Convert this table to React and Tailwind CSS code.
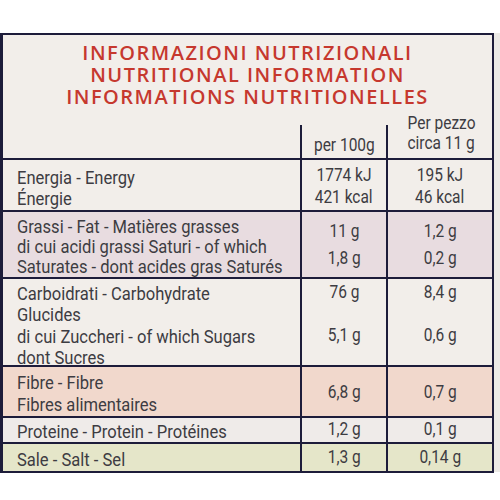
const rows = [
  {
    bg: "bg-[#f2eeea]",
    h: "h-[52px]",
    labelPad: "pt-[7px] leading-[21px]",
    label: ["Energia - Energy", "Énergie"],
    valPad: "pt-[4px] leading-[22px]",
    a: ["1774 kJ", "421 kcal"],
    b: ["195 kJ", "46 kcal"],
  },
  {
    bg: "bg-[#e8dce0]",
    h: "h-[67px]",
    labelPad: "pt-[5px] leading-[20px]",
    label: [
      "Grassi - Fat - Matières grasses",
      "di cui acidi grassi Saturi - of which",
      "Saturates - dont acides gras Saturés",
    ],
    valPad: "pt-[5px] leading-[27px]",
    a: ["11 g", "1,8 g"],
    b: ["1,2 g", "0,2 g"],
  },
  {
    bg: "bg-[#f2eeea]",
    h: "h-[88px]",
    labelPad: "pt-[4px] leading-[21.3px]",
    label: [
      "Carboidrati - Carbohydrate",
      "Glucides",
      "di cui Zuccheri - of which Sugars",
      "dont Sucres",
    ],
    valPad: "pt-[2px] leading-[21.5px]",
    a: ["76 g", "", "5,1 g"],
    b: ["8,4 g", "", "0,6 g"],
  },
  {
    bg: "bg-[#f1d8cc]",
    h: "h-[51px]",
    labelPad: "pt-[5px] leading-[22px]",
    label: ["Fibre - Fibre", "Fibres alimentaires"],
    valPad: "pt-[14px] leading-[22px]",
    a: ["6,8 g"],
    b: ["0,7 g"],
  },
  {
    bg: "bg-[#efebe9]",
    h: "h-[26px]",
    labelPad: "pt-[3px] leading-[21px]",
    label: ["Proteine - Protein - Protéines"],
    valPad: "pt-[0px] leading-[21px]",
    a: ["1,2 g"],
    b: ["0,1 g"],
  },
  {
    bg: "bg-[#e5e6c9]",
    h: "h-[27px]",
    labelPad: "pt-[5px] leading-[21px]",
    label: ["Sale - Salt - Sel"],
    valPad: "pt-[2px] leading-[21px]",
    a: ["1,3 g"],
    b: ["0,14 g"],
  },
];

// the print uses a condensed DIN face; squeeze Roboto to match its width
const Lines = ({ items, left }) =>
  items.map((t, i) => (
    <div
      key={i}
      className={`whitespace-nowrap ${
        left ? "origin-left scale-x-[0.92]" : "origin-center scale-x-[0.86]"
      }`}
    >
      {t || "\u00a0"}
    </div>
  ));

export default function App() {
  return (
    <div className="w-[500px] h-[500px] bg-white pt-[33px] overflow-hidden">
      <div className="flex">
        <div
          className="w-[494px] bg-[#f2eeea] border-l-[3px] border-t-2 border-r-2 border-b-2 border-[#1d1c3a] text-[#3d3c42] text-[18px]"
          style={{ fontFamily: 'Roboto, "Liberation Sans", sans-serif' }}
        >
          {/* title */}
          <div
            className="h-[88px] pt-[7px] text-center text-[#c6382e] font-semibold text-[20px] leading-[22px] tracking-[1.5px]"
            style={{ fontFamily: '"Open Sans", "DejaVu Sans", sans-serif' }}
          >
            <div>INFORMAZIONI NUTRIZIONALI</div>
            <div>NUTRITIONAL INFORMATION</div>
            <div>INFORMATIONS NUTRITIONELLES</div>
          </div>

          {/* column headers */}
          <div className="grid grid-cols-[299px_86px_1fr] h-[37px] border-b-2 border-[#1d1c3a]">
            <div className="border-r-2 border-[#1d1c3a] mt-[2px]" />
            <div className="border-r-2 border-[#1d1c3a] mt-[2px] flex flex-col items-center pt-[9px] leading-[21px]">
              <Lines items={["per 100g"]} />
            </div>
            <div className="flex flex-col items-center -mt-[10px] leading-[20px] pl-[2px]">
              <Lines items={["Per pezzo", "circa 11 g"]} />
            </div>
          </div>

          {rows.map((r, i) => (
            <div
              key={i}
              className={`grid grid-cols-[299px_86px_1fr] ${r.h} ${r.bg} ${
                i < rows.length - 1 ? "border-b-2 border-[#1d1c3a]" : ""
              }`}
            >
              <div className={`border-r-2 border-[#1d1c3a] pl-[14px] ${r.labelPad}`}>
                <Lines items={r.label} left />
              </div>
              <div className={`border-r-2 border-[#1d1c3a] flex flex-col items-center ${r.valPad}`}>
                <Lines items={r.a} />
              </div>
              <div className={`flex flex-col items-center ${r.valPad}`}>
                <Lines items={r.b} />
              </div>
            </div>
          ))}
        </div>
        <div className="flex-1 h-[439px] bg-[#eceae6]" />
      </div>
    </div>
  );
}
